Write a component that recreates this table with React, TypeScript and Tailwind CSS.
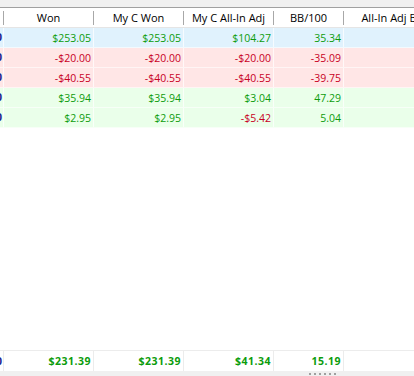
const cols = [
  { key: "won", title: "Won", w: "w-[90px]" },
  { key: "mycwon", title: "My C Won", w: "w-[90px]" },
  { key: "adj", title: "My C All-In Adj", w: "w-[90px]" },
  { key: "bb", title: "BB/100", w: "w-[70px]" },
];

type Row = { bg: string; vals: string[] };

const rows: Row[] = [
  { bg: "bg-[#e0f2fd]", vals: ["$253.05", "$253.05", "$104.27", "35.34"] },
  { bg: "bg-[#ffe6e6]", vals: ["-$20.00", "-$20.00", "-$20.00", "-35.09"] },
  { bg: "bg-[#ffe6e6]", vals: ["-$40.55", "-$40.55", "-$40.55", "-39.75"] },
  { bg: "bg-[#eaffea]", vals: ["$35.94", "$35.94", "$3.04", "47.29"] },
  { bg: "bg-[#eaffea]", vals: ["$2.95", "$2.95", "-$5.42", "5.04"] },
];

const totals = ["$231.39", "$231.39", "$41.34", "15.19"];

function valColor(v: string) {
  return v.startsWith("-") ? "text-[#c8001e]" : "text-[#0c9c0c]";
}

function EdgeCell({ cls }: { cls: string }) {
  return (
    <div className={`w-[4px] shrink-0 overflow-hidden flex justify-end items-center border-r ${cls}`}>
      <span className="text-[#1c2390] font-bold pr-[1px] whitespace-nowrap">0</span>
    </div>
  );
}

export default function App() {
  return (
    <div
      className="w-[414px] h-[376px] bg-white overflow-hidden flex flex-col text-[10.5px] leading-none"
      style={{ fontFamily: '"Open Sans", "Noto Sans", sans-serif' }}
    >
      <div className="h-[7px] shrink-0 bg-[#f0f0f0]" />
      <div className="h-[1px] shrink-0 bg-[#a0a0a0]" />

      {/* header */}
      <div className="h-[20px] shrink-0 flex bg-white border-b border-[#e5e5e5] text-black text-[11px]">
        <div className="w-[4px] shrink-0 flex items-center justify-end">
          <div className="w-[1px] h-[14px] bg-[#a8a8a8]" />
        </div>
        {cols.map((c) => (
          <div key={c.key} className={`${c.w} shrink-0 flex items-center`}>
            <div className="flex-1 text-center whitespace-nowrap">{c.title}</div>
            <div className="w-[1px] h-[14px] bg-[#a8a8a8]" />
          </div>
        ))}
        <div className="w-[120px] shrink-0 flex items-center justify-center whitespace-nowrap">
          All-In Adj BB/100
        </div>
      </div>

      {/* rows */}
      {rows.map((r, i) => (
        <div key={i} className={`h-[20px] shrink-0 flex ${r.bg} border-b border-white/60`}>
          <EdgeCell cls="border-white/70" />
          {r.vals.map((v, j) => (
            <div
              key={j}
              className={`${cols[j].w} shrink-0 flex items-center justify-end pr-[2px] pt-[1px] border-r border-white/70 ${valColor(v)}`}
            >
              {v}
            </div>
          ))}
          <div className="flex-1" />
        </div>
      ))}

      <div className="flex-1" />

      {/* totals */}
      <div className="h-[21px] shrink-0 flex bg-white border-t border-[#ececec] font-bold">
        <EdgeCell cls="border-[#ececec]" />
        {totals.map((v, j) => (
          <div
            key={j}
            className={`${cols[j].w} shrink-0 flex items-center justify-end pr-[2px] tracking-[0.5px] border-r border-[#ececec] text-[#0c9c0c]`}
          >
            {v}
          </div>
        ))}
        <div className="flex-1" />
      </div>

      {/* bottom bar with grip */}
      <div className="h-[5px] shrink-0 bg-[#f0f0f0] flex items-end">
        <div className="ml-[309px] flex gap-[3px] pb-[1px]">
          {[0, 1, 2, 3, 4, 5].map((d) => (
            <div key={d} className="w-[2px] h-[2px] bg-[#a0a0a0]" />
          ))}
        </div>
      </div>
    </div>
  );
}
